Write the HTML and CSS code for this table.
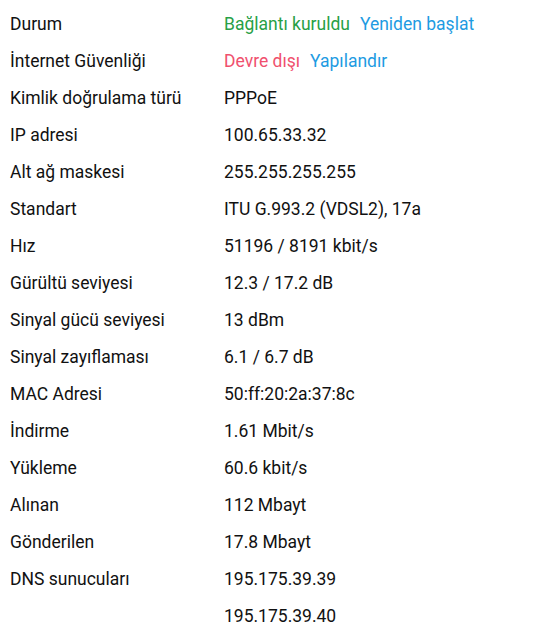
FILE: index.html
```html
<!DOCTYPE html>
<html lang="tr">
<head>
<meta charset="utf-8">
<link rel="stylesheet" href="styles.css">
</head>
<body>
<div class="table">
  <div class="label">Durum</div>
  <div class="value"><span class="ok">Bağlantı kuruldu</span><a class="link">Yeniden başlat</a></div>
  <div class="label">İnternet Güvenliği</div>
  <div class="value"><span class="off">Devre dışı</span><a class="link">Yapılandır</a></div>
  <div class="label">Kimlik doğrulama türü</div>
  <div class="value">PPPoE</div>
  <div class="label">IP adresi</div>
  <div class="value">100.65.33.32</div>
  <div class="label">Alt ağ maskesi</div>
  <div class="value">255.255.255.255</div>
  <div class="label">Standart</div>
  <div class="value">ITU G.993.2 (VDSL2), 17a</div>
  <div class="label">Hız</div>
  <div class="value">51196 / 8191 kbit/s</div>
  <div class="label">Gürültü seviyesi</div>
  <div class="value">12.3 / 17.2 dB</div>
  <div class="label">Sinyal gücü seviyesi</div>
  <div class="value">13 dBm</div>
  <div class="label">Sinyal zayıflaması</div>
  <div class="value">6.1 / 6.7 dB</div>
  <div class="label">MAC Adresi</div>
  <div class="value">50:ff:20:2a:37:8c</div>
  <div class="label">İndirme</div>
  <div class="value">1.61 Mbit/s</div>
  <div class="label">Yükleme</div>
  <div class="value">60.6 kbit/s</div>
  <div class="label">Alınan</div>
  <div class="value">112 Mbayt</div>
  <div class="label">Gönderilen</div>
  <div class="value">17.8 Mbayt</div>
  <div class="label">DNS sunucuları</div>
  <div class="value">195.175.39.39</div>
  <div class="label"></div>
  <div class="value">195.175.39.40</div>
</div>
</body>
</html>
```
FILE: styles.css
```css
html, body {
  margin: 0;
  padding: 0;
  background: #fff;
}
body {
  font-family: Roboto, "Noto Sans", sans-serif;
  font-size: 17.5px;
  color: #111;
}
.table {
  display: grid;
  grid-template-columns: 214px auto;
  grid-auto-rows: 37px;
  padding: 6px 0 0 10px;
  line-height: 37px;
}
.ok { color: #27a046; }
.off { color: #f0506e; }
.link {
  color: #1e9be2;
  margin-left: 10px;
  cursor: pointer;
}
```
